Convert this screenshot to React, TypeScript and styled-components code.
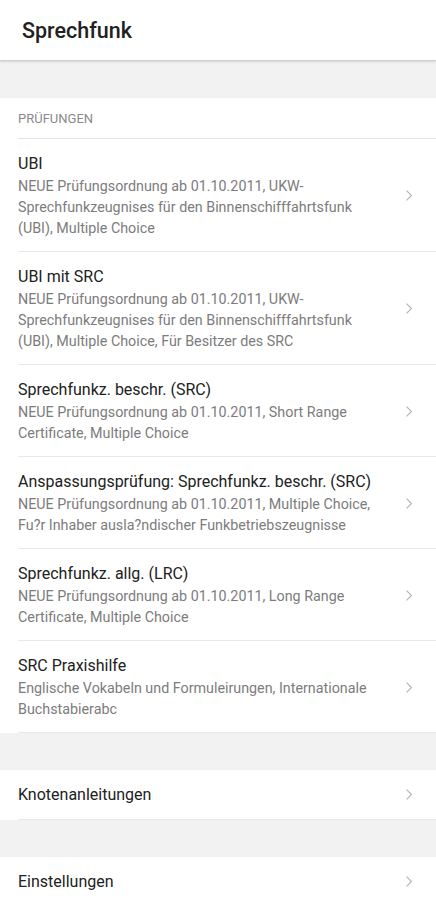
import React from 'react';
import styled, { createGlobalStyle } from 'styled-components';

const GlobalStyle = createGlobalStyle`
  html, body {
    margin: 0;
    padding: 0;
    background: #f2f2f2;
    font-family: Roboto, "Noto Sans", Arial, sans-serif;
  }
`;

type Exam = { title: string; subtitle: string };

const exams: Exam[] = [
  {
    title: 'UBI',
    subtitle:
      'NEUE Prüfungsordnung ab 01.10.2011, UKW-Sprechfunkzeugnises für den Binnenschifffahrtsfunk (UBI), Multiple Choice',
  },
  {
    title: 'UBI mit SRC',
    subtitle:
      'NEUE Prüfungsordnung ab 01.10.2011, UKW-Sprechfunkzeugnises für den Binnenschifffahrtsfunk (UBI), Multiple Choice, Für Besitzer des SRC',
  },
  {
    title: 'Sprechfunkz. beschr. (SRC)',
    subtitle: 'NEUE Prüfungsordnung ab 01.10.2011, Short Range Certificate, Multiple Choice',
  },
  {
    title: 'Anspassungsprüfung: Sprechfunkz. beschr. (SRC)',
    subtitle:
      'NEUE Prüfungsordnung ab 01.10.2011, Multiple Choice, Fu?r Inhaber ausla?ndischer Funkbetriebszeugnisse',
  },
  {
    title: 'Sprechfunkz. allg. (LRC)',
    subtitle: 'NEUE Prüfungsordnung ab 01.10.2011, Long Range Certificate, Multiple Choice',
  },
  {
    title: 'SRC Praxishilfe',
    subtitle: 'Englische Vokabeln und Formuleirungen, Internationale Buchstabierabc',
  },
];

function Chevron() {
  return (
    <ChevronIcon viewBox="0 0 10 16" width="8" height="13">
      <path d="M2 2 L8 8 L2 14" fill="none" stroke="#b3b3b3" strokeWidth="1.4" />
    </ChevronIcon>
  );
}

export default function App() {
  return (
    <Page>
      <GlobalStyle />
      <Header>
        <HeaderTitle>Sprechfunk</HeaderTitle>
      </Header>
      <Spacer />
      <Section>
        <SectionLabel>PRÜFUNGEN</SectionLabel>
        {exams.map((exam) => (
          <Row key={exam.title}>
            <RowText>
              <RowTitle>{exam.title}</RowTitle>
              <RowSubtitle>{exam.subtitle}</RowSubtitle>
            </RowText>
            <Chevron />
          </Row>
        ))}
      </Section>
      <Spacer />
      <Section>
        <SingleRow>
          <RowTitle>Knotenanleitungen</RowTitle>
          <Chevron />
        </SingleRow>
      </Section>
      <Spacer />
      <Section>
        <SingleRow>
          <RowTitle>Einstellungen</RowTitle>
          <Chevron />
        </SingleRow>
      </Section>
    </Page>
  );
}

const Page = styled.div`
  width: 436px;
  min-height: 900px;
  background: #f2f2f2;
`;

const Header = styled.header`
  height: 60px;
  background: #fff;
  display: flex;
  align-items: center;
  padding-left: 22px;
  border-bottom: 1px solid #d0d0d0;
  box-shadow: 0 1px 2px rgba(0, 0, 0, 0.12);
`;

const HeaderTitle = styled.h1`
  margin: 0;
  font-size: 21.5px;
  font-weight: 500;
  color: #212121;
`;

const Spacer = styled.div`
  height: 37px;
`;

const Section = styled.section`
  background: #fff;
  padding-left: 18px;
`;

const SectionLabel = styled.div`
  height: 40px;
  display: flex;
  align-items: center;
  font-size: 13px;
  color: #8a8a8a;
  border-bottom: 1px solid #e4e4e4;
`;

const Row = styled.div`
  display: flex;
  align-items: center;
  padding: 13px 0 12px;
  border-bottom: 1px solid #e8e8e8;
`;

const SingleRow = styled.div`
  height: 49px;
  display: flex;
  align-items: center;
  border-bottom: 1px solid #e8e8e8;
`;

const RowText = styled.div`
  flex: 1;
  min-width: 0;
  padding-right: 12px;
`;

const RowTitle = styled.div`
  flex: 1;
  font-size: 16px;
  line-height: 24px;
  color: #212121;
  white-space: nowrap;
`;

const RowSubtitle = styled.div`
  font-size: 14.3px;
  line-height: 21px;
  color: #7c7c7c;
  padding-right: 4px;
`;

const ChevronIcon = styled.svg`
  flex: none;
  margin-right: 23px;
`;
